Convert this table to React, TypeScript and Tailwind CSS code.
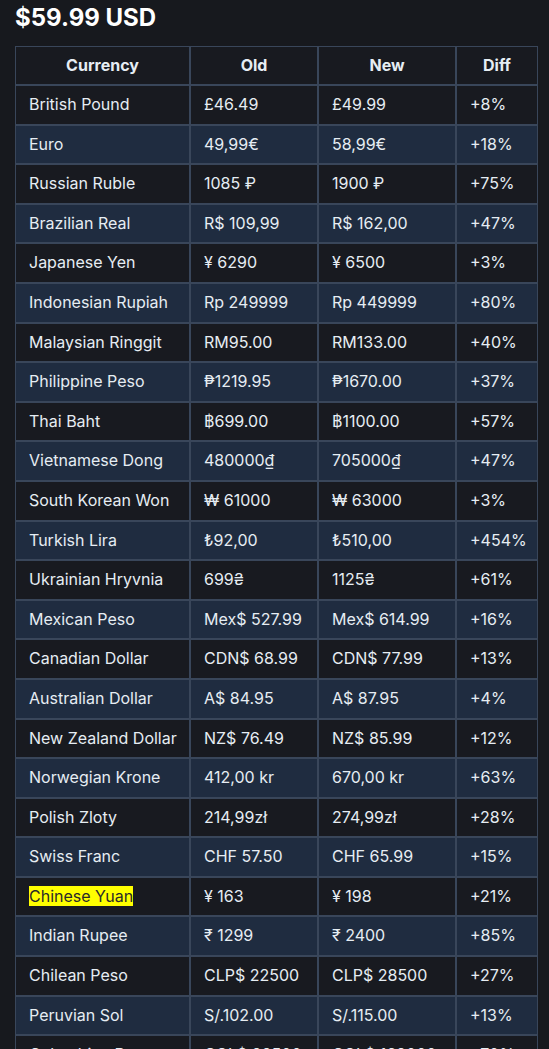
const rows: [string, string, string, string][] = [
  ['British Pound', '£46.49', '£49.99', '+8%'],
  ['Euro', '49,99€', '58,99€', '+18%'],
  ['Russian Ruble', '1085 ₽', '1900 ₽', '+75%'],
  ['Brazilian Real', 'R$ 109,99', 'R$ 162,00', '+47%'],
  ['Japanese Yen', '¥ 6290', '¥ 6500', '+3%'],
  ['Indonesian Rupiah', 'Rp 249999', 'Rp 449999', '+80%'],
  ['Malaysian Ringgit', 'RM95.00', 'RM133.00', '+40%'],
  ['Philippine Peso', '₱1219.95', '₱1670.00', '+37%'],
  ['Thai Baht', '฿699.00', '฿1100.00', '+57%'],
  ['Vietnamese Dong', '480000₫', '705000₫', '+47%'],
  ['South Korean Won', '₩ 61000', '₩ 63000', '+3%'],
  ['Turkish Lira', '₺92,00', '₺510,00', '+454%'],
  ['Ukrainian Hryvnia', '699₴', '1125₴', '+61%'],
  ['Mexican Peso', 'Mex$ 527.99', 'Mex$ 614.99', '+16%'],
  ['Canadian Dollar', 'CDN$ 68.99', 'CDN$ 77.99', '+13%'],
  ['Australian Dollar', 'A$ 84.95', 'A$ 87.95', '+4%'],
  ['New Zealand Dollar', 'NZ$ 76.49', 'NZ$ 85.99', '+12%'],
  ['Norwegian Krone', '412,00 kr', '670,00 kr', '+63%'],
  ['Polish Zloty', '214,99zł', '274,99zł', '+28%'],
  ['Swiss Franc', 'CHF 57.50', 'CHF 65.99', '+15%'],
  ['Chinese Yuan', '¥ 163', '¥ 198', '+21%'],
  ['Indian Rupee', '₹ 1299', '₹ 2400', '+85%'],
  ['Chilean Peso', 'CLP$ 22500', 'CLP$ 28500', '+27%'],
  ['Peruvian Sol', 'S/.102.00', 'S/.115.00', '+13%'],
  ['Colombian Peso', 'COL$ 99500', 'COL$ 169000', '+70%'],
]

const cell = 'border border-[#39465a] px-[13px] py-[6px] leading-[25.6px] text-left whitespace-nowrap'

export default function App() {
  return (
    <div
      className="min-h-screen bg-[#17191e] text-[#e6edf3] px-[15px] overflow-hidden"
      style={{ fontFamily: 'Inter, "Noto Sans", sans-serif' }}
    >
      <h2 className="pt-[3px] text-[24px] leading-[30px] font-bold text-white mb-[13px]">
        $59.99 USD
      </h2>
      <table className="w-[523px] table-fixed border-separate border-spacing-0 text-[16px]">
        <colgroup>
          <col className="w-[175px]" />
          <col className="w-[128px]" />
          <col className="w-[138px]" />
          <col className="w-[82px]" />
        </colgroup>
        <thead>
          <tr className="bg-[#181a20]">
            {['Currency', 'Old', 'New', 'Diff'].map((h) => (
              <th key={h} className="border border-[#39465a] px-[13px] py-[6px] leading-[25px] font-bold text-center">
                {h}
              </th>
            ))}
          </tr>
        </thead>
        <tbody>
          {rows.map((r, i) => (
            <tr key={r[0]} className={i % 2 === 1 ? 'bg-[#1f2c40]' : 'bg-[#181a20]'}>
              <td className={cell}>
                {r[0] === 'Chinese Yuan' ? (
                  <span className="bg-[#ffff00] text-[#2a2a2a]">{r[0]}</span>
                ) : (
                  r[0]
                )}
              </td>
              <td className={cell}>{r[1]}</td>
              <td className={cell}>{r[2]}</td>
              <td className={cell}>{r[3]}</td>
            </tr>
          ))}
        </tbody>
      </table>
    </div>
  )
}
